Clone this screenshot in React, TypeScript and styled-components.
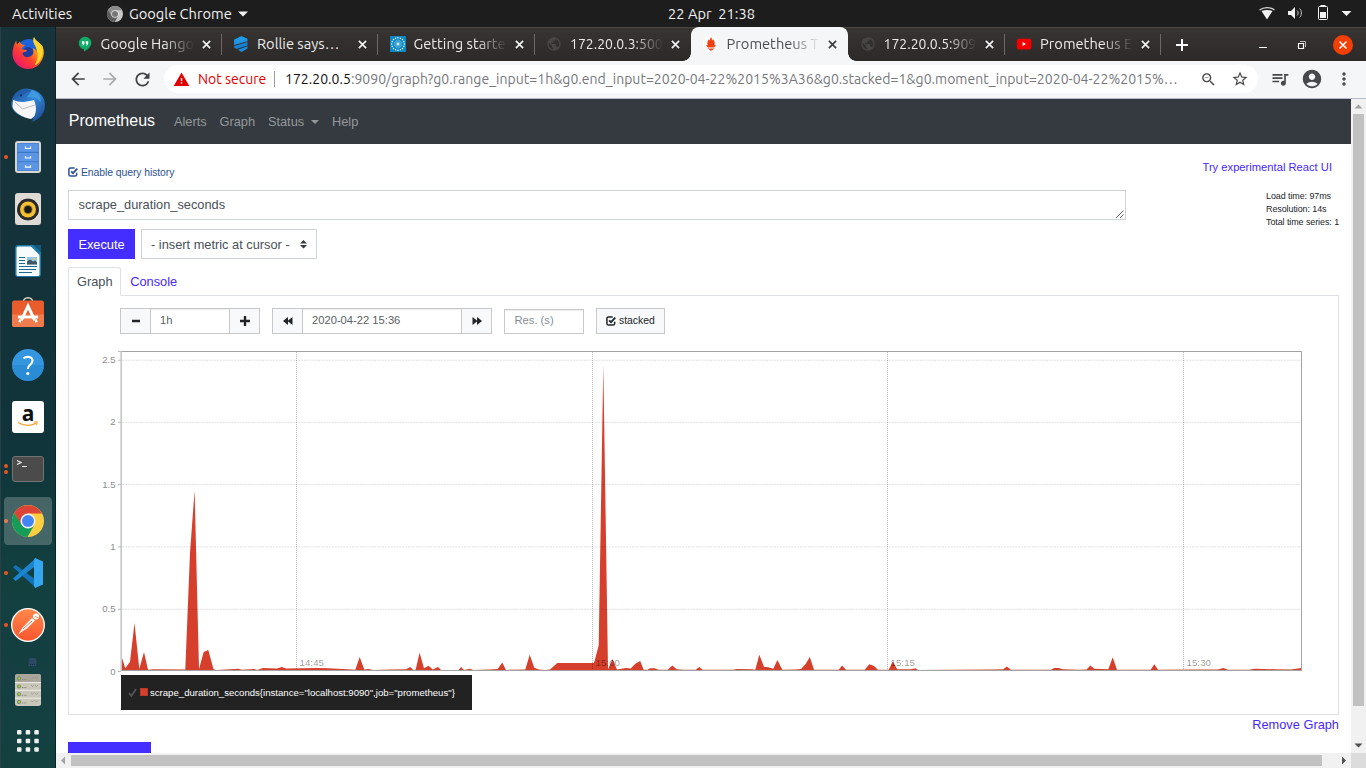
import React from "react";
import styled, { createGlobalStyle } from "styled-components";
import {
  MdArrowBack,
  MdArrowForward,
  MdRefresh,
  MdWarning,
  MdStarBorder,
  MdZoomOut,
  MdQueueMusic,
  MdAccountCircle,
  MdMoreVert,
  MdPublic,
} from "react-icons/md";

const GlobalStyle = createGlobalStyle`
  * { box-sizing: border-box; }
  body { margin: 0; overflow: hidden; font-family: "Liberation Sans", Arial, sans-serif; }
  svg { display: block; flex: none; }
`;

const uiFont = `"Ubuntu", "Noto Sans", sans-serif`;

const Desktop = styled.div`
  width: 1366px;
  height: 768px;
  display: flex;
  flex-direction: column;
  overflow: hidden;
  background: #fff;
`;

/* ---------- system bar ---------- */

const TopBar = styled.header`
  height: 27px;
  flex: none;
  display: grid;
  grid-template-columns: 656px 1fr 110px;
  align-items: center;
  background: #1d1d1d;
  color: #f2f2f2;
  font: 14.67px/26px ${uiFont};
  white-space: pre;
`;

const TopLeft = styled.div`
  display: flex;
  align-items: center;
  padding-left: 12px;
`;

const Label = styled.span<{ $width?: number; $gap?: number }>`
  width: ${(p) => (p.$width ? `${p.$width}px` : "auto")};
  margin-left: ${(p) => p.$gap ?? 0}px;
  white-space: pre;
  flex: none;
`;

const Clock = styled.div`
  padding-left: 12px;
`;

const Body = styled.div`
  flex: 1;
  display: flex;
  min-height: 0;
`;

/* ---------- dock ---------- */

const Dock = styled.nav`
  width: 56px;
  flex: none;
  display: flex;
  flex-direction: column;
  border-left: 1px solid #2b4046;
  border-right: 1px solid #0d2227;
  background: linear-gradient(180deg, #17343b 0%, #14323a 30%, #10343a 55%, #12403f 75%, #153f42 88%, #12413f 100%);
`;

const DockItem = styled.div<{ $h?: number }>`
  height: ${(p) => p.$h ?? 52}px;
  flex: none;
  display: grid;
  grid-template-columns: 8px 38px 8px;
  align-items: center;
  justify-items: center;
`;

const Dots = styled.div`
  display: flex;
  flex-direction: column;
  gap: 2px;
  padding-left: 2px;
`;

const Dot = styled.i`
  width: 4px;
  height: 4px;
  border-radius: 2px;
  background: #e95420;
`;

const IconSlot = styled.div<{ $active?: boolean }>`
  width: 48px;
  height: 48px;
  display: flex;
  align-items: center;
  justify-content: center;
  border-radius: 4px;
  background: ${(p) => (p.$active ? "rgba(255,255,255,.22)" : "none")};
`;

/* ---------- browser ---------- */

const Browser = styled.main`
  flex: 1;
  min-width: 0;
  display: flex;
  flex-direction: column;
`;

const TabStrip = styled.div`
  height: 34px;
  flex: none;
  display: flex;
  padding-left: 9px;
  background: linear-gradient(#373432, #2c2929);
  border-top: 1px solid #4b4843;
`;

const Tab = styled.div<{ $active?: boolean; $sep?: boolean }>`
  width: ${(p) => (p.$active ? 157 : 156.5)}px;
  height: 34px;
  margin-top: -1px;
  flex: none;
  display: flex;
  align-items: center;
  padding-left: 11.5px;
  position: relative;
  font: 14px/34px ${uiFont};
  color: ${(p) => (p.$active ? "#4a4c50" : "#ecebea")};
  background: ${(p) => (p.$active ? "#f5f6f8" : "none")};
  border-radius: 8px 8px 0 0;

  &::after {
    content: "";
    display: ${(p) => (p.$sep ? "block" : "none")};
    position: absolute;
    right: 0;
    top: 7px;
    width: 1px;
    height: 21px;
    background: #6b6867;
  }
`;

const TabTitle = styled.span<{ $fade?: boolean; $numeric?: boolean }>`
  width: 95px;
  margin: 0 0 1px 8px;
  overflow: hidden;
  white-space: nowrap;
  font-size: ${(p) => (p.$numeric ? 14 : 14.67)}px;
  mask-image: ${(p) => (p.$fade ? "linear-gradient(90deg, #000 66%, transparent 98%)" : "none")};
`;

const TabClose = styled.span`
  margin-left: 6px;
  display: flex;
`;

const Foot = styled.i<{ $side: "left" | "right" }>`
  position: absolute;
  bottom: 0;
  ${(p) => p.$side}: -8px;
  width: 8px;
  height: 8px;
  background: radial-gradient(circle at ${(p) => (p.$side === "left" ? "0 0" : "100% 0")}, transparent 7.5px, #f5f6f8 8px);
`;

const NewTab = styled.div`
  width: 41px;
  display: flex;
  align-items: center;
  justify-content: center;
`;

const WindowControls = styled.div`
  margin-left: auto;
  width: 118px;
  display: flex;
  align-items: center;
  padding-left: 10px;
  gap: 29px;

  svg:last-child { margin-left: -3px; }
`;

const Toolbar = styled.div`
  height: 38px;
  flex: none;
  display: flex;
  align-items: center;
  padding: 0 12px 1px 12px;
  background: #f5f6f8;
  border-bottom: 1px solid #b5bcc8;
  color: #46484c;
`;

const NavButton = styled.span<{ $dim?: boolean }>`
  width: 20px;
  margin-right: 12px;
  display: flex;
  color: ${(p) => (p.$dim ? "#a9abae" : "#3f4144")};
`;

const Omnibox = styled.div`
  width: 1094px;
  height: 28px;
  flex: none;
  border-radius: 14px;
  background: #fff;
  display: flex;
  align-items: center;
  padding-left: 9px;
  font: 14px/28px ${uiFont};
`;

const Danger = styled.span`
  display: flex;
  align-items: center;
  gap: 8px;
  width: 101px;
  flex: none;
  color: #e30000;
`;

const Divider = styled.i`
  width: 1px;
  height: 16px;
  background: #9a9c9f;
`;

const Url = styled.span`
  margin-left: 10px;
  width: 903px;
  flex: none;
  white-space: nowrap;
  color: #75777b;
  letter-spacing: 0.03px;
  b { font-weight: 400; color: #111; }
`;

const OmniboxActions = styled.div`
  display: flex;
  align-items: center;
  gap: 14px;
  margin-left: 12px;
`;

const Actions = styled.div`
  display: flex;
  align-items: center;
  gap: 11px;
  margin-left: 12px;
`;

/* ---------- page ---------- */

const Viewport = styled.div`
  flex: 1;
  min-height: 0;
  display: grid;
  grid-template-columns: 1295px 15px;
  grid-template-rows: 654px 15px;
`;

const Page = styled.div`
  overflow: hidden;
  background: #fff;
  color: #212529;
  font-size: 12.8px;
`;

const Navbar = styled.nav`
  height: 45px;
  display: flex;
  align-items: center;
  padding-left: 12.8px;
  background: #343a40;
  color: #95989b;
`;

const Brand = styled.span`
  color: #fff;
  font-size: 16px;
  width: 105.2px;
  padding-bottom: 1px;
`;

const NavLink = styled.span`
  margin-right: 12.8px;
  display: flex;
  align-items: center;
`;

const Caret = styled.i`
  margin-left: 7px;
  border: 4px solid transparent;
  border-top-color: currentColor;
  border-bottom: 0;
`;

const Content = styled.div`
  padding: 0 12px;
`;

const HistoryRow = styled.div`
  height: 46px;
  display: flex;
  justify-content: space-between;
  padding-right: 7px;
`;

const HistoryToggle = styled.span`
  display: flex;
  align-items: center;
  gap: 3px;
  height: 16px;
  margin-top: 20px;
  font-size: 10.4px;
  letter-spacing: -0.07px;
  color: #2d5293;
`;

const Link = styled.a`
  color: #4628ff;
`;

const ReactLink = styled(Link)`
  font-size: 11.2px;
  margin-top: 17px;
`;

const QueryRow = styled.div`
  display: flex;
  justify-content: space-between;
  height: 39px;
`;

const QueryBox = styled.div`
  width: 1058px;
  height: 30px;
  border: 1px solid #ced4da;
  padding: 0 1px 0 9.5px;
  line-height: 28px;
  color: #495057;
  display: flex;
  justify-content: space-between;
  align-items: flex-start;
`;

const Stats = styled.div`
  width: 73px;
  white-space: nowrap;
  font-size: 8.96px;
  letter-spacing: -0.08px;
  line-height: 13px;
`;

const ExecuteRow = styled.div`
  display: flex;
  gap: 6px;
  height: 38px;
`;

const Execute = styled.div`
  width: 67px;
  height: 30px;
  background: #432eff;
  color: #fff;
  text-align: center;
  line-height: 31px;
`;

const Select = styled.div`
  width: 176px;
  height: 30px;
  border: 1px solid #ced4da;
  padding: 0 9px;
  display: flex;
  align-items: center;
  justify-content: space-between;
  color: #495057;
`;

const PanelTabs = styled.div`
  height: 29px;
  display: flex;
  margin-bottom: -1px;
  position: relative;
`;

const PanelTab = styled.div<{ $active?: boolean }>`
  height: 29px;
  line-height: 27px;
  padding: 0 7.6px 0 8px;
  border: 1px solid ${(p) => (p.$active ? "#dee2e6" : "transparent")};
  border-bottom-color: ${(p) => (p.$active ? "#fff" : "transparent")};
  border-radius: 3px 3px 0 0;
  color: ${(p) => (p.$active ? "#495057" : "#4628ff")};
`;

const Panel = styled.section`
  height: 420px;
  border: 1px solid #dee2e6;
  padding-top: 12px;
`;

const Controls = styled.div`
  height: 26px;
  display: flex;
  gap: 12px;
  padding-left: 51px;
`;

const Group = styled.div`
  display: flex;
  height: 26px;
  border: 1px solid #c8c8c8;
`;

const SmallButton = styled.span`
  width: 29px;
  display: flex;
  align-items: center;
  justify-content: center;
  background: #f8f9fa;
`;

const Field = styled.span<{ $w: number }>`
  width: ${(p) => p.$w}px;
  padding-left: 9px;
  border: solid #c8c8c8;
  border-width: 0 1px;
  box-shadow: inset 0 1px 1px rgba(0, 0, 0, 0.075);
  font-size: 11.2px;
  line-height: 23px;
  color: #5a5f64;
`;

const Resolution = styled.div`
  width: 80px;
  height: 25px;
  margin-top: 1px;
  border: 1px solid #c8c8c8;
  box-shadow: inset 0 1px 1px rgba(0, 0, 0, 0.075);
  padding-left: 9.5px;
  font-size: 11.2px;
  line-height: 21px;
  color: #888e94;
`;

const Stacked = styled.div`
  width: 69px;
  height: 26px;
  border: 1px solid #c8c8c8;
  background: #f8f9fa;
  display: flex;
  align-items: center;
  gap: 3px;
  padding: 0 0 1px 9px;
  font-size: 10.4px;
`;

const ChartArea = styled.div`
  height: 332px;
  margin-top: 9px;
`;

const Legend = styled.div`
  width: 351px;
  height: 35px;
  margin-left: 52px;
  background: #222;
  color: #fff;
  display: flex;
  align-items: center;
  padding-left: 7px;
  font-size: 9.6px;
`;

const Swatch = styled.i`
  width: 8px;
  height: 8px;
  margin: 0 2px 1px 3px;
  background: #d63f2b;
  border: 1px solid #ba3a28;
`;

const RemoveRow = styled.div`
  height: 27px;
  line-height: 20px;
  text-align: right;
`;

const AddGraph = styled.div`
  width: 83px;
  height: 30px;
  background: #432eff;
`;

const VScroll = styled.div`
  background: #f1f1f1;
  display: flex;
  flex-direction: column;
  align-items: center;
  justify-content: space-between;
`;

const HScroll = styled.div`
  background: #f1f1f1;
  display: flex;
  align-items: center;
  justify-content: space-between;
`;

const VThumb = styled.i`
  width: 11px;
  height: 592px;
  margin-bottom: auto;
  background: #c1c1c1;
`;

const HThumb = styled.i`
  height: 11px;
  width: 1251px;
  margin-right: auto;
  background: #c1c1c1;
`;

const Corner = styled.div`
  background: #dcdcdc;
`;

/* ---------- small drawings ---------- */

const CheckBoxIcon = ({ size = 10 }: { size?: number }) => (
  <svg width={size} height={size} viewBox="0 0 10 10" fill="none" stroke="currentColor">
    <path d="M8.700 5.800v1.600a1.700 1.700 0 0 1-1.700 1.700H2.600A1.700 1.700 0 0 1 .9 7.400V2.600A1.700 1.700 0 0 1 2.600.9h4.100" strokeWidth="1.500" />
    <path d="M3.100 4.300l1.900 1.900L9.300 1.700" strokeWidth="1.800" />
  </svg>
);

const CloseX = ({ color = "#f2f2f2" }: { color?: string }) => (
  <svg width="9" height="9" viewBox="0 0 9 9" stroke={color} strokeWidth="1.700">
    <path d="M.9.9l7.200 7.200M8.100.9L.9 8.100" />
  </svg>
);

const Arrow = ({ dir, color }: { dir: "up" | "down" | "left" | "right"; color: string }) => {
  const d = {
    up: "M3.5 9.5h8l-4-4z",
    down: "M3.5 5.5h8l-4 4z",
    left: "M9 3.5v8l-4-4z",
    right: "M6 3.5v8l4-4z",
  }[dir];
  return (
    <svg width="15" height="15">
      <path d={d} fill={color} />
    </svg>
  );
};

/* ---------- favicons ---------- */

const Hangouts = () => (
  <svg width="16" height="16" viewBox="0 0 16 16">
    <path d="M8 .7a6.400 6.400 0 0 0-1 12.700V15.600c3.500-1.700 7.400-4.900 7.400-8.500A6.400 6.400 0 0 0 8 .7z" fill="#0fa968" />
    <path d="M4.900 5.300h2.500v2.500L6.300 9.400H5.400L5.900 7.800h-1zM8.700 5.300h2.500v2.500l-1.100 1.600h-.9l.5-1.600h-1z" fill="#fff" />
  </svg>
);

const Rollie = () => (
  <svg width="16" height="16" viewBox="0 0 16 16">
    <path d="M1 3.700L8.500.3 14.500 3v2.300L1 9z" fill="#2490e0" />
    <path d="M1 3.700L8.500.3 14.500 3 5 6.500z" fill="#1f9be8" />
    <path d="M1 9.900L14.500 6v3.400L3.500 13 1 11.500z" fill="#1681d0" />
    <path d="M5 13.700l9.500-3.500v2.300L8.500 16z" fill="#1b8de0" />
  </svg>
);

const Spark = () => (
  <svg width="16" height="16" viewBox="0 0 16 16">
    <rect width="16" height="16" fill="#0c88c4" />
    {Array.from({ length: 16 }, (_, i) => (
      <g key={i} transform={`rotate(${i * 22.5} 8 8)`}>
        <path d="M8 3.500v3.500" stroke="#8acbe9" strokeWidth=".5" />
        <circle cx="8" cy="1.700" r=".75" fill="#fff" />
      </g>
    ))}
    <circle cx="8" cy="8" r="1.200" fill="#d5eefa" />
  </svg>
);

const Flame = () => (
  <svg width="16" height="16" viewBox="0 0 16 16">
    <circle cx="8" cy="8" r="8" fill="#fff" />
    <path d="M8 1c1 1.600.9 2.700 1.500 3.400.5-.4.400-1 .5-1.500 1.500 2 2.300 4.200 1.400 6.300l1.300-.5c0 1-.6 1.700-1.200 2.200H4.500c-.7-.5-1.200-1.200-1.200-2.200l1.300.5C3.900 7.200 4.600 5 6.100 3c.1.600.1 1.100.5 1.400C7.200 3.600 7.200 2.600 8 1zM4.500 11.500h7v1h-7zM6 13h4.200c-.3 1-1.100 1.600-2.100 1.600S6.300 14 6 13z" fill="#f0410f" />
  </svg>
);

const YouTube = () => (
  <svg width="16" height="16" viewBox="0 0 16 16">
    <rect x=".8" y="2.700" width="14.500" height="10.800" rx="2.200" fill="#f40000" />
    <path d="M6.600 5.900v4.200L10 8z" fill="#fff" />
  </svg>
);

const Globe = () => <MdPublic size={16} color="#484645" />;

/* ---------- dock icons ---------- */

const ChromeBall = ({ size, grey }: { size: number; grey?: boolean }) => {
  const c = grey ? ["#8c8c8c", "#5d5d5d", "#c8c8c8", "#777", "#e8e8e8"] : ["#dc4437", "#139d58", "#ffcd40", "#4285f4", "#f5f5f5"];
  return (
    <svg width={size} height={size} viewBox="0 0 32 32">
      <circle cx="16" cy="16" r="16" fill={c[2]} />
      <path d="M2.140 8A16 16 0 0 1 29.860 8.500H16V16L9 20z" fill={c[0]} />
      <path d="M2.140 8A16 16 0 0 0 15.500 32L22.500 19.750 16 16 9.500 19.750z" fill={c[1]} />
      <circle cx="16" cy="16" r="7.500" fill={c[4]} />
      <circle cx="16" cy="16" r="6" fill={c[3]} />
    </svg>
  );
};

const Firefox = () => (
  <svg width="34" height="34" viewBox="0 0 34 34">
    <defs>
      <linearGradient id="ff" x1="0" y1=".9" x2=".8" y2="0">
        <stop offset="0" stopColor="#e3107a" />
        <stop offset=".4" stopColor="#ff3b34" />
        <stop offset=".7" stopColor="#ff9716" />
        <stop offset="1" stopColor="#ffe82e" />
      </linearGradient>
    </defs>
    <circle cx="18" cy="15" r="12" fill="#1c62d8" />
    <circle cx="17" cy="17" r="6" fill="#223a9c" />
    <path d="M23 1c1 4 5.500 5 8.500 9.500 2 4 1.800 9-.5 13.500C28 30 23 33 17 33 8.500 33 2 26.500 1.500 18.500 1.200 13.500 3 8 5.200 4.500L6 8.500 9 5.500C9 8 11 8.700 14 9c-1 1.500-3.300 2.500-3.800 4 1 .8 3.800 0 6 1.800-2.200 2-4.200.5-4.700 2.700.5 3.500 5 4.500 7.500 3 3-1 4.600-4.500 2.500-8.500 2.700.8 3.600 2.500 4 4C26.500 9 20.500 8 23 1z" fill="url(#ff)" />
    <path d="M23 1c1 4 5.500 5 8.500 9.500 1 8-1 16-8 19 3-5 4-10 2.500-14C26 9 20.500 8 23 1z" fill="#ffd52a" />
  </svg>
);

const Thunderbird = () => (
  <svg width="36" height="36" viewBox="0 0 36 36">
    <defs>
      <linearGradient id="tb" x1="0" y1="0" x2="1" y2="1">
        <stop offset="0" stopColor="#1c4b93" />
        <stop offset=".5" stopColor="#3288d8" />
        <stop offset="1" stopColor="#1b3f86" />
      </linearGradient>
    </defs>
    <path d="M2 12C5 4 13 0 20 2c9 1 15 8 15 16 0 9-6 15-14 17l3-3C12 31 2 26 1 17z" fill="url(#tb)" />
    <path d="M4 10c4-7 12-9 18-6-6 1-8 4-12 5z" fill="#235ead" />
    <path d="M22 3c6 2 9 7 9 12l-5-4-9-1 3-4z" fill="#4199df" />
    <path d="M3 13c7 3 14 2 21 0 2 5 3 10 .5 16L21 32C12 30 5 26 2.500 20z" fill="#f6f6f6" />
    <path d="M5 15L12.500 22 25 18" fill="none" stroke="#b9babd" strokeWidth="1" />
    <circle cx="11" cy="8.500" r="1" fill="#16264d" />
  </svg>
);

const Files = () => (
  <svg width="26" height="32" viewBox="0 0 26 32">
    <rect width="26" height="32" rx="3" fill="#d9d6d0" />
    <rect x="2" y="2" width="22" height="28" rx="1" fill="#3d78c7" />
    {[2.500, 12, 21.200].map((y) => (
      <g key={y}>
        <rect x="2.500" y={y} width="21" height="8.300" fill="#5b96e6" />
        <path d={`M10.500 ${y + 3}v2h5v-2`} stroke="#fff" fill="none" strokeWidth="1.200" />
      </g>
    ))}
  </svg>
);

const Rhythmbox = () => (
  <svg width="26" height="32" viewBox="0 0 26 32">
    <rect width="26" height="32" rx="3" fill="#dedad4" />
    <circle cx="13" cy="16.500" r="11.500" fill="#f4f3f1" />
    <circle cx="13" cy="16.500" r="11" fill="#292929" />
    <circle cx="13" cy="16.500" r="8" fill="#f2c032" />
    <circle cx="13" cy="16.500" r="4.500" fill="#8f722a" />
    <circle cx="13" cy="16.500" r="3.600" fill="#191919" />
  </svg>
);

const Writer = () => (
  <svg width="26" height="32" viewBox="0 0 26 32">
    <path d="M3 0h16l7 7v22a3 3 0 0 1-3 3H3a3 3 0 0 1-3-3V3a3 3 0 0 1 3-3z" fill="#1a79a9" />
    <path d="M19 0h7v7z" fill="#17587e" />
    <path d="M3 1.500h13L24.500 10v19.500a1.500 1.500 0 0 1-1.500 1.500H3a1.500 1.500 0 0 1-1.500-1.500V3A1.500 1.500 0 0 1 3 1.500z" fill="#f8fbfc" />
    <path d="M4 12.500h6M4 15.500h6M4 18.500h6M4 21.500h18M4 24.500h17M4 27.500h13" stroke="#196a94" strokeWidth="1.100" />
    <rect x="12" y="12" width="10" height="7.500" fill="#95c7e5" />
    <path d="M12 19.500v-3l3-2 3 2 2-1 2 2v2z" fill="#3e5866" />
    <circle cx="19" cy="14" r="1" fill="#f3ce45" />
  </svg>
);

const Software = () => (
  <svg width="32" height="32" viewBox="0 0 32 32">
    <path d="M11 6c0-7 10-7 10 0" fill="none" stroke="#e3dac4" strokeWidth="1.500" />
    <rect y="3.500" width="32" height="26.500" rx="2.500" fill="#e95d2d" />
    <path d="M0 17.500h32v10a2.500 2.500 0 0 1-2.500 2.500h-27A2.500 2.500 0 0 1 0 27.500z" fill="#f07b4d" />
    <path d="M9.500 23L16 9 22.500 23" fill="none" stroke="#fff" strokeWidth="3" />
    <path d="M6 20h20" stroke="#fff" strokeWidth="2.800" />
    <path d="M8.500 22.500l-1 2.700M23.500 22.500l1 2.700" stroke="#fff" strokeWidth="2.500" />
  </svg>
);

const HelpIcon = () => (
  <svg width="32" height="32" viewBox="0 0 32 32">
    <circle cx="16" cy="16" r="16" fill="#3596e0" />
    <path d="M0 16a16 16 0 0 0 32 0z" fill="#2687d0" opacity=".7" />
    <path d="M11.500 9.500c2.500-2.300 9-2.500 9 2.300 0 4-4.700 4-4.700 8.200" fill="none" stroke="#fff" strokeWidth="2.100" />
    <circle cx="15.800" cy="24.500" r="1.600" fill="#fff" />
  </svg>
);

const AmazonTile = styled.div`
  width: 32px;
  height: 32px;
  border-radius: 3px;
  background: #fff;
  color: #111;
  display: flex;
  flex-direction: column;
  align-items: center;
  font: 700 21px/24px "Noto Sans", sans-serif;

  svg { margin-top: -4px; }
`;

const Amazon = () => (
  <AmazonTile>
    <span>a</span>
    <svg width="22" height="6">
      <path d="M1 1.500c6 3.500 13 3.500 18 .6" fill="none" stroke="#f5a02b" strokeWidth="1.300" />
      <path d="M17 1l3.500-.2-1 3.200" fill="none" stroke="#f5a02b" />
    </svg>
  </AmazonTile>
);

const Terminal = () => (
  <svg width="32" height="26" viewBox="0 0 32 26">
    <rect x=".5" y=".5" width="31" height="25" rx="2.500" fill="#4b4b4b" stroke="#737373" />
    <path d="M5 4.500l4 2-4 2M10 10.500h5" fill="none" stroke="#f1f1f1" strokeWidth="1.200" />
  </svg>
);

const VSCode = () => (
  <svg width="32" height="30" viewBox="0 0 32 30">
    <path d="M1 9.300l2.700-2.200L24 22v8z" fill="#1273b9" />
    <path d="M1 20.600l2.700 2.300L24 7.500V0z" fill="#1b86cf" />
    <path d="M23 0l8 3.500v23L23 30l-1-2V2z" fill="#35a7ef" />
  </svg>
);

const Postman = () => (
  <svg width="34" height="34" viewBox="0 0 34 34">
    <defs>
      <linearGradient id="pm" x1="0" y1="0" x2="0" y2="1">
        <stop offset="0" stopColor="#ff894b" />
        <stop offset="1" stopColor="#fa552d" />
      </linearGradient>
    </defs>
    <circle cx="17" cy="17" r="16.300" fill="url(#pm)" stroke="#fff" strokeWidth="1.300" />
    <path d="M7 27l5-8 9-9 3 2.500-8 8-5 3z" fill="#fff" />
    <path d="M12 21l9-8" stroke="#fa7543" strokeWidth="1" />
    <circle cx="25" cy="8.500" r="3" fill="#fff" />
    <path d="M24 8.500l3.500 1.300" stroke="#fa7543" strokeWidth=".8" />
  </svg>
);

const Drive = () => (
  <svg width="26" height="48" viewBox="0 0 26 48">
    <path d="M14.500 0h6l1 2v6h-8V2z" fill="#2b4964" />
    <path d="M15 6.500h5" stroke="#163240" strokeDasharray="1 1" />
    <rect y="16" width="26" height="32" rx="2.500" fill="#c9c7b9" />
    <path d="M0 24v-5.500A2.500 2.500 0 0 1 2.500 16h21a2.500 2.500 0 0 1 2.500 2.500V24z" fill="#a9a59a" />
    {[20.500, 28.500, 36.300, 44].map((y) => (
      <g key={y}>
        <circle cx="4" cy={y} r="2" fill="#777" />
        <circle cx="4" cy={y} r="1.300" fill="#90ce3b" />
        <path d={`M7 ${y + 1}h5`} stroke="#888477" strokeDasharray="1 .7" />
        <path d={`M16 ${y - 1.500}l1.500 1.500 1.500-1.500M20 ${y - 1.500}l1.500 1.500 1.500-1.500`} stroke="#999689" fill="none" strokeWidth=".8" />
      </g>
    ))}
    <path d="M0 24.500h26M0 32.300h26M0 40.200h26" stroke="#eeece4" />
  </svg>
);

const AppGrid = () => (
  <svg width="22" height="22">
    {[0, 8.700, 17.300].flatMap((x) =>
      [0, 8.700, 17.300].map((y) => <rect key={`${x}-${y}`} x={x} y={y} width="4.500" height="4.500" rx="1" fill="#f0f1f1" />)
    )}
  </svg>
);

const dockApps: { id: string; icon: React.ReactNode; dots?: number; active?: boolean }[] = [
  { id: "firefox", icon: <Firefox /> },
  { id: "thunderbird", icon: <Thunderbird /> },
  { id: "files", icon: <Files />, dots: 1 },
  { id: "rhythmbox", icon: <Rhythmbox /> },
  { id: "writer", icon: <Writer /> },
  { id: "software", icon: <Software /> },
  { id: "help", icon: <HelpIcon /> },
  { id: "amazon", icon: <Amazon /> },
  { id: "terminal", icon: <Terminal />, dots: 2 },
  { id: "chrome", icon: <ChromeBall size={32} />, dots: 1, active: true },
  { id: "vscode", icon: <VSCode />, dots: 1 },
  { id: "postman", icon: <Postman />, dots: 1 },
];

const tabs: { title: string; icon: React.ReactNode; sep?: boolean; active?: boolean; fade?: boolean; numeric?: boolean }[] = [
  { title: "Google Hango", icon: <Hangouts />, sep: true, fade: true },
  { title: "Rollie says…", icon: <Rollie />, sep: true },
  { title: "Getting starte", icon: <Spark />, sep: true, fade: true },
  { title: "172.20.0.3:500", icon: <Globe />, fade: true, numeric: true },
  { title: "Prometheus T", icon: <Flame />, active: true, fade: true },
  { title: "172.20.0.5:909", icon: <Globe />, sep: true, fade: true, numeric: true },
  { title: "Prometheus E", icon: <YouTube />, sep: true, fade: true },
];

/* ---------- chart ---------- */

const series: [number, number][] = [
  [121, 655], [125.3, 668.3], [130, 661.7], [134.5, 623], [139.3, 669], [144, 652], [148, 669.8], [153.5, 669.2],
  [185.3, 669.5], [190, 553], [194.6, 490.5], [199, 669], [203.7, 652], [208.3, 650], [213.5, 669.2], [216, 669.9],
  [226, 669.5], [238, 668.7], [242, 669.8], [254, 669], [257, 669.9], [263, 668], [277, 668.4], [281.700, 667],
  [286, 668.6], [318, 668], [328, 668.3], [348, 669.2], [355.3, 669.7], [359.7, 657], [364.3, 669.6], [368.700, 669],
  [373, 669.9], [391, 669.5], [406, 669.3], [410.3, 667], [413.3, 669.9], [415.700, 669.6], [419.6, 652.700],
  [424, 668.3], [428.6, 665.8], [432.700, 669.5], [438, 667], [441, 669.9], [458.6, 669.9], [461, 667], [464, 669.9],
  [470, 668.7], [473, 669.9], [489, 669.4], [497.7, 669], [502.3, 662.4], [506, 669.9], [525.3, 669.6], [529.7, 654.8],
  [534.3, 667.7], [538.7, 669.4], [545, 669.9], [550, 669.6], [557.3, 663.1], [594, 663.1], [598.7, 645.5],
  [603.3, 365.5], [608, 669.3], [612.5, 659], [617, 669.6], [626, 668], [630.7, 668.6], [635.3, 663.7], [640.2, 661],
  [643.7, 669.7], [647.7, 669.7], [650, 668.3], [654.5, 668.3], [658.6, 669.8], [667.7, 669.7], [672.3, 665.600],
  [676.7, 669.3], [684, 669.8], [695.7, 669.7], [699.3, 667], [702.6, 669.8], [733, 669.8], [737, 669],
  [752, 669.3], [755.3, 669.7], [759.3, 654.8], [764, 666.7], [768.3, 667.3], [773.3, 668.7], [777.4, 660],
  [782.3, 669.7], [795, 669.4], [801, 669], [805.6, 664], [809.8, 657], [814, 669.7], [838.7, 669.7], [842, 665.6],
  [846, 669.7], [864.7, 669.7], [869.3, 664.3], [874, 666], [878, 669.7], [888.7, 669.7], [892.7, 661.6],
  [897.3, 669.3], [911, 669.2], [915.3, 668.3], [918.3, 669.9], [992, 669.4], [1003.3, 669.3], [1007, 666.6],
  [1010.7, 669.7], [1051, 669.7], [1054.3, 667.9], [1058.7, 667.9], [1062.7, 669.3], [1080, 669.7], [1086.7, 669.6],
  [1090.3, 665.6], [1094.3, 668.7], [1108.3, 669.3], [1112.7, 657.2], [1117, 669.7], [1150.7, 669.7], [1154.3, 664.3],
  [1158, 669.7], [1195, 669.4], [1217.7, 669.6], [1223.3, 668], [1228, 669.7], [1249, 669.7], [1255, 668.7],
  [1275, 669.2], [1291, 669.6], [1301.3, 668],
];

const yTicks: [string, number][] = [["2.5", 360.2], ["2", 422.4], ["1.5", 484.6], ["1", 546.9], ["0.5", 609.3], ["0", 671.500]];
const xTicks: [string, number][] = [["14:45", 296.5], ["15:00", 592.500], ["15:15", 887.5], ["15:30", 1183.5]];

const Chart = () => (
  <svg width="1269" height="332" viewBox="69 343 1269 332" fontFamily="Liberation Sans, Arial, sans-serif" fontSize="9.6">
    <path d={`M121 670.500L${series.map((p) => p.join(" ")).join("L")}L1301.300 670.500z`} fill="#d63f2b" />
    <g stroke="#000" strokeOpacity=".12" strokeDasharray="2 .8">
      {yTicks.slice(0, 5).map(([t, y]) => <path key={t} d={`M122 ${y}H1301`} />)}
    </g>
    <g stroke="#000" strokeOpacity=".27" strokeDasharray="1 1">
      {xTicks.map(([t, x]) => <path key={t} d={`M${x} 352V670`} />)}
    </g>
    <g fill="#000" fillOpacity=".42">
      {xTicks.map(([t, x]) => <text key={t} x={x + 3} y="666" letterSpacing=".1">{t}</text>)}
    </g>
    <path d="M121 351.500H1301.500V670.500H121" fill="none" stroke="#a3a3a3" />
    <path d="M121.200 351V671" stroke="#c6c6c6" strokeWidth="1.600" />
    <path d="M118 351.500h3" stroke="#bbb" />
    {yTicks.map(([t, y]) => <path key={t} d={`M118 ${y}h3`} stroke="#bbb" />)}
    <g fill="#8c8c8c" textAnchor="end">
      {yTicks.map(([t, y]) => <text key={t} x="115.500" y={y + 3}>{t}</text>)}
    </g>
  </svg>
);

export default function App() {
  return (
    <Desktop>
      <GlobalStyle />
      <TopBar>
        <TopLeft>
          <Label $width={95}>Activities</Label>
          <ChromeBall size={16} grey />
          <Label $width={109} $gap={6}>Google Chrome</Label>
          <svg width="10" height="6"><path d="M0 .5h10L5 5.500z" fill="#f2f2f2" /></svg>
        </TopLeft>
        <Clock>22 Apr  21:38</Clock>
        <svg width="110" height="27">
          <g fill="#f2f2f2">
            <path d="M5.500 11l5.500 8.500 5.500-8.500C13 9.500 9 9.500 5.500 11z" />
            <path d="M3.500 10c4.500-3.200 10.500-3.200 15 0" stroke="#d8d8d8" fill="none" strokeWidth="1.300" />
            <path d="M32 11h3l4-4v12l-4-4h-3z" />
            <path d="M41 10.500c1.500 1 1.500 4 0 5M43.500 8.500c2.500 2 2.500 7 0 9" stroke="#ccc" fill="none" />
            <path d="M64.500 5h5v2h-5zM64 12h6v6h-6z" />
            <rect x="62.500" y="6.500" width="9" height="13" rx="1" fill="none" stroke="#f2f2f2" />
            <path d="M85.500 11h10l-5 5z" />
          </g>
        </svg>
      </TopBar>
      <Body>
        <Dock>
          {dockApps.map((a) => (
            <DockItem key={a.id}>
              <Dots>{Array.from({ length: a.dots ?? 0 }, (_, i) => <Dot key={i} />)}</Dots>
              <IconSlot $active={a.active}>{a.icon}</IconSlot>
            </DockItem>
          ))}
          <DockItem $h={62}>
            <Dots />
            <Drive />
          </DockItem>
          <DockItem $h={56}>
            <Dots />
            <AppGrid />
          </DockItem>
        </Dock>
        <Browser>
          <TabStrip>
            {tabs.map((t) => (
              <Tab key={t.title} $active={t.active} $sep={t.sep}>
                {t.active && <Foot $side="left" />}
                {t.icon}
                <TabTitle $fade={t.fade} $numeric={t.numeric}>{t.title}</TabTitle>
                <TabClose><CloseX color={t.active ? "#3d3f42" : "#f2f2f2"} /></TabClose>
                {t.active && <Foot $side="right" />}
              </Tab>
            ))}
            <NewTab>
              <svg width="12" height="12"><path d="M6 0v12M0 6h12" stroke="#fff" strokeWidth="2" /></svg>
            </NewTab>
            <WindowControls>
              <svg width="10" height="10"><path d="M1 7.500h8" stroke="#fff" /></svg>
              <svg width="10" height="10" fill="none" stroke="#fff">
                <path d="M1.500 3.500h5v5h-5z" strokeWidth="1.200" />
                <path d="M3 1.500h5.500V7" stroke="#bbb" />
              </svg>
              <svg width="20" height="20" viewBox="0 0 20 20">
                <circle cx="10" cy="10" r="10" fill="#f33e05" />
                <path d="M6.500 6.500l7 7m0-7l-7 7" stroke="#fff" strokeWidth="1.500" />
              </svg>
            </WindowControls>
          </TabStrip>
          <Toolbar>
            <NavButton><MdArrowBack size={20} /></NavButton>
            <NavButton $dim><MdArrowForward size={20} /></NavButton>
            <NavButton><MdRefresh size={21} /></NavButton>
            <Omnibox>
              <Danger><MdWarning size={17} /><Label>Not secure</Label></Danger>
              <Divider />
              <Url>
                <b>172.20.0.5</b>:9090/graph?g0.range_input=1h&amp;g0.end_input=2020-04-22%2015%3A36&amp;g0.stacked=1&amp;g0.moment_input=2020-04-22%2015%…
              </Url>
              <OmniboxActions>
                <MdZoomOut size={17} />
                <MdStarBorder size={18} />
              </OmniboxActions>
            </Omnibox>
            <Actions>
              <MdQueueMusic size={20} />
              <MdAccountCircle size={22} />
              <MdMoreVert size={20} />
            </Actions>
          </Toolbar>
          <Viewport>
            <Page>
              <Navbar>
                <Brand>Prometheus</Brand>
                <NavLink>Alerts</NavLink>
                <NavLink>Graph</NavLink>
                <NavLink>Status<Caret /></NavLink>
                <NavLink>Help</NavLink>
              </Navbar>
              <Content>
                <HistoryRow>
                  <HistoryToggle><CheckBoxIcon />Enable query history</HistoryToggle>
                  <ReactLink>Try experimental React UI</ReactLink>
                </HistoryRow>
                <QueryRow>
                  <QueryBox>
                    scrape_duration_seconds
                    <svg width="8" height="28"><path d="M0 27l7.500-7.500M4 27l3.500-3.500" stroke="#555" strokeWidth=".9" /></svg>
                  </QueryBox>
                  <Stats>
                    <div>Load time: 97ms</div>
                    <div>Resolution: 14s</div>
                    <div>Total time series: 1</div>
                  </Stats>
                </QueryRow>
                <ExecuteRow>
                  <Execute>Execute</Execute>
                  <Select>
                    - insert metric at cursor -
                    <svg width="7" height="9"><path d="M0 3.500L3.500 0 7 3.500zM0 5l3.500 3.500L7 5z" fill="#343a40" /></svg>
                  </Select>
                </ExecuteRow>
                <PanelTabs>
                  <PanelTab $active>Graph</PanelTab>
                  <PanelTab>Console</PanelTab>
                </PanelTabs>
                <Panel>
                  <Controls>
                    <Group>
                      <SmallButton><svg width="10" height="10"><path d="M1 5h8" stroke="#212529" strokeWidth="2.500" /></svg></SmallButton>
                      <Field $w={80}>1h</Field>
                      <SmallButton><svg width="10" height="10"><path d="M0 5h10M5 0v10" stroke="#212529" strokeWidth="2.400" /></svg></SmallButton>
                    </Group>
                    <Group>
                      <SmallButton><svg width="10" height="8"><path d="M5 0v8L0 4zM9.500 0v8l-5-4z" fill="#212529" /></svg></SmallButton>
                      <Field $w={160}>2020-04-22 15:36</Field>
                      <SmallButton><svg width="10" height="8"><path d="M.5 0v8l5-4zM5 0v8l5-4z" fill="#212529" /></svg></SmallButton>
                    </Group>
                    <Resolution>Res. (s)</Resolution>
                    <Stacked><CheckBoxIcon />stacked</Stacked>
                  </Controls>
                  <ChartArea><Chart /></ChartArea>
                  <Legend>
                    <svg width="9" height="9"><path d="M1 5l2.300 3L8 1" fill="none" stroke="#565656" strokeWidth="1.700" /></svg>
                    <Swatch />
                    <span>scrape_duration_seconds&#123;instance="localhost:9090",job="prometheus"&#125;</span>
                  </Legend>
                </Panel>
                <RemoveRow><Link>Remove Graph</Link></RemoveRow>
                <AddGraph />
              </Content>
            </Page>
            <VScroll>
              <Arrow dir="up" color="#a3a3a3" />
              <VThumb />
              <Arrow dir="down" color="#505050" />
            </VScroll>
            <HScroll>
              <Arrow dir="left" color="#a3a3a3" />
              <HThumb />
              <Arrow dir="right" color="#505050" />
            </HScroll>
            <Corner />
          </Viewport>
        </Browser>
      </Body>
    </Desktop>
  );
}
